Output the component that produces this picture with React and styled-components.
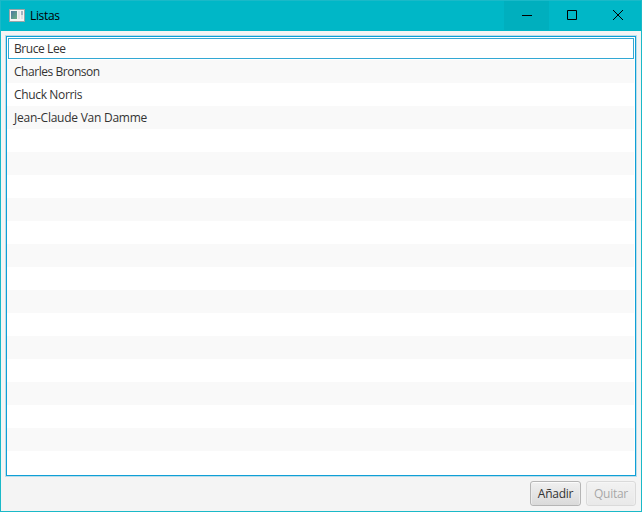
import React from "react";
import styled, { createGlobalStyle } from "styled-components";

const GlobalStyle = createGlobalStyle`
  * { box-sizing: border-box; }
  body { margin: 0; overflow: hidden; font-family: "Open Sans", "Noto Sans", sans-serif; font-size: 12px; }
`;

const Window = styled.main`
  width: 642px;
  height: 512px;
  display: flex;
  flex-direction: column;
  border: 1px solid #1ab9c8;
  background: #f4f4f4;
`;

const TitleBar = styled.header`
  height: 30px;
  flex: none;
  display: flex;
  align-items: center;
  padding-left: 8px;
  background: #00b7c7;
`;

const Title = styled.h1`
  flex: 1;
  margin: 0 0 0 5px;
  font-size: 12px;
  font-weight: 400;
  line-height: 16px;
  letter-spacing: -0.35px;
  color: #000;
`;

const Caption = styled.button`
  width: ${(p) => p.$width || 46}px;
  height: 29px;
  align-self: flex-start;
  display: flex;
  align-items: center;
  justify-content: center;
  padding: 0 0 1px ${(p) => (p.$width ? 1 : 0)}px;
  border: 0;
  background: ${(p) => (p.$hover ? "#00afbe" : "transparent")};
`;

const Content = styled.section`
  flex: 1;
  display: flex;
  flex-direction: column;
  gap: 5px;
  padding: 5px;
`;

const List = styled.ul`
  height: 440px;
  flex: none;
  margin: 0;
  padding: 0 1px 1px 0;
  list-style: none;
  border: 1px solid #0f9fd6;
  box-shadow: 0 0 0 1px #b9deeb;
  background: #fff;
`;

const Row = styled.li`
  height: 23px;
  padding: 1px 0 1px 1px;
  background: #fff;
  &:nth-child(even) { background: #f9f9f9; }
`;

const Cell = styled.div`
  height: 21px;
  padding-left: 5px;
  border: 1px solid ${(p) => (p.$focused ? "#32a8d4" : "transparent")};
  font-size: 12px;
  line-height: 19px;
  letter-spacing: ${(p) => p.$spacing}px;
  color: #333;
`;

const Actions = styled.footer`
  display: flex;
  justify-content: flex-end;
  gap: 5px;
`;

const Button = styled.button`
  width: ${(p) => p.$width}px;
  height: 25px;
  padding: 0;
  border: 1px solid #b5b5b5;
  border-radius: 3px;
  background: linear-gradient(#f0f0f0, #dadada);
  box-shadow: inset 0 1px 0 #fbfbfb, inset 1px 0 0 #ececec, inset -1px 0 0 #ececec;
  font: 12px/22px "Open Sans", "Noto Sans", sans-serif;
  letter-spacing: -0.25px;
  color: #333;
  &:disabled { opacity: 0.4; }
`;

const people = [
  { name: "Bruce Lee", spacing: -0.42 },
  { name: "Charles Bronson", spacing: -0.46 },
  { name: "Chuck Norris", spacing: -0.35 },
  { name: "Jean-Claude Van Damme", spacing: -0.25 },
];
const rows = Array.from({ length: 19 }, (_, i) => people[i] || { name: "", spacing: 0 });

function AppIcon() {
  return (
    <svg width="16" height="16" viewBox="0 0 16 16" shapeRendering="crispEdges">
      <defs>
        <linearGradient id="pane" x1="0" y1="0" x2="1" y2="1">
          <stop offset="0" stopColor="#4d78a0" />
          <stop offset="1" stopColor="#69b183" />
        </linearGradient>
      </defs>
      <rect x="0" y="1" width="16" height="13" fill="#9aa5a8" />
      <rect x="1" y="2" width="14" height="11" fill="#f4f4f4" />
      <rect x="2" y="3" width="6" height="8" fill="url(#pane)" />
      <rect x="9" y="3" width="2" height="8" fill="#e3e5e7" />
      <rect x="12" y="3" width="2" height="4" fill="#a3b5c0" />
      <rect x="12" y="7" width="2" height="4" fill="#dde3e3" />
    </svg>
  );
}

export default function App() {
  return (
    <Window>
      <GlobalStyle />
      <TitleBar>
        <AppIcon />
        <Title>Listas</Title>
        <Caption $hover $width={45} aria-label="Minimizar">
          <svg width="10" height="10"><path d="M0 5.5H10" stroke="#000" /></svg>
        </Caption>
        <Caption aria-label="Maximizar">
          <svg width="10" height="10"><path d="M.5.5h9v9h-9z" fill="none" stroke="#000" /></svg>
        </Caption>
        <Caption aria-label="Cerrar">
          <svg width="10" height="10"><path d="M0 0L10 10M10 0L0 10" stroke="#000" /></svg>
        </Caption>
      </TitleBar>
      <Content>
        <List>
          {rows.map((person, i) => (
            <Row key={i}><Cell $focused={i === 0} $spacing={person.spacing}>{person.name}</Cell></Row>
          ))}
        </List>
        <Actions>
          <Button $width={51}>Añadir</Button>
          <Button $width={50} disabled>Quitar</Button>
        </Actions>
      </Content>
    </Window>
  );
}
